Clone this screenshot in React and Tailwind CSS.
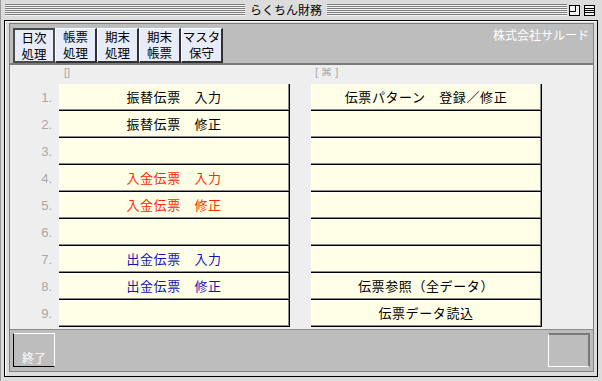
import React from "react";

const left = [
  { text: "振替伝票　入力", color: "text-black" },
  { text: "振替伝票　修正", color: "text-black" },
  { text: "", color: "text-black" },
  { text: "入金伝票　入力", color: "text-[#ff2a00]" },
  { text: "入金伝票　修正", color: "text-[#ff2a00]" },
  { text: "", color: "text-black" },
  { text: "出金伝票　入力", color: "text-[#1414b4]" },
  { text: "出金伝票　修正", color: "text-[#1414b4]" },
  { text: "", color: "text-black" },
];

const right = [
  "伝票パターン　登録／修正",
  "",
  "",
  "",
  "",
  "",
  "",
  "伝票参照（全データ）",
  "伝票データ読込",
];

const tabs = [
  ["日次", "処理"],
  ["帳票", "処理"],
  ["期末", "処理"],
  ["期末", "帳票"],
  ["マスタ", "保守"],
];

function Stripes() {
  return (
    <div className="flex-1 h-[12px] bg-[repeating-linear-gradient(to_bottom,#7c7c7c_0px,#7c7c7c_1px,#f4f4f4_1px,#f4f4f4_2px)]" />
  );
}

function MenuButton({ text, color }) {
  return (
    <div
      className={`h-[27px] w-[231px] flex items-center justify-center bg-[#ffffe8] border-r border-b border-black shadow-[inset_-1px_-1px_0_#8a8a8a,inset_1px_1px_0_#ffffff] text-[13px] tracking-[0.6px] ${color}`}
    >
      {text}
    </div>
  );
}

export default function App() {
  return (
    <div className="w-[602px] h-[381px] bg-[#dcdcdc] flex flex-col font-['Noto_Sans_CJK_JP',sans-serif] border-l border-[#9a9a9a]">
      {/* Title bar */}
      <div className="h-[20px] flex items-center pl-[4px] pr-[7px]">
        <Stripes />
        <span className="px-[5px] text-[12px] leading-none text-black">らくちん財務</span>
        <Stripes />
        <div className="flex items-center gap-[4px] pl-[2px]">
          <svg width="11" height="11" viewBox="0 0 11 11">
            <rect x="0.5" y="0.5" width="10" height="10" fill="#f4f4f4" stroke="#000" />
            <path d="M0.5 6.5H6.5V0.5" fill="none" stroke="#000" />
          </svg>
          <svg width="11" height="11" viewBox="0 0 11 11">
            <rect x="0.5" y="0.5" width="10" height="10" fill="#f4f4f4" stroke="#000" />
            <path d="M1 3.5H10M1 5.5H10M1 7.5H10" stroke="#000" />
          </svg>
        </div>
      </div>

      {/* Window frame */}
      <div className="ml-[3px] w-[594px] h-[357px] border border-black">
        <div className="h-full border-l border-t border-white pt-[1px] pl-[3px] pr-[3px] pb-[4px]">
          <div className="h-full border border-[#808080] flex flex-col">
            {/* Toolbar */}
            <div className="h-[39px] bg-[#bdbdbd] flex items-start justify-between pl-[3px] pr-[4px] pt-[4px]">
              <div className="flex">
                {tabs.map((t, i) => (
                  <div
                    key={i}
                    className={`w-[42px] h-[35px] flex flex-col items-center justify-center bg-[#e8ecf8] text-[12.5px] leading-[16px] text-black ${
                      i === 0
                        ? "border-2 border-[#4a4a4a]"
                        : "border-t border-l border-white border-r-2 border-b-2 border-r-[#303030] border-b-[#303030]"
                    }`}
                  >
                    <span className="block h-[16px]">{t[0]}</span>
                    <span className="block h-[16px]">{t[1]}</span>
                  </div>
                ))}
              </div>
              <span className="text-[12px] leading-[14px] text-white">株式会社サルード</span>
            </div>
            <div className="h-[2px] bg-[#7a7a7a]" />

            {/* Content */}
            <div className="h-[264px] bg-[#eeeeee] flex">
              <div className="flex flex-col">
                <div className="h-[19px] pl-[54px] pt-[1px] text-[11px] leading-[13px] text-[#a8a8a8] font-['Liberation_Sans',sans-serif]">
                  []
                </div>
                {left.map((b, i) => (
                  <div key={i} className="flex">
                    <div className="w-[49px] h-[27px] flex items-center justify-end pr-[7px] text-[13px] text-[#a8a8a8] font-['Liberation_Sans',sans-serif]">
                      {i + 1}.
                    </div>
                    <MenuButton text={b.text} color={b.color} />
                  </div>
                ))}
              </div>
              <div className="flex flex-col pl-[21px]">
                <div className="h-[19px] pl-[4px] pt-[1px] text-[11px] leading-[13px] text-[#a8a8a8] font-['Liberation_Sans',sans-serif]">
                  [ ⌘ ]
                </div>
                {right.map((t, i) => (
                  <MenuButton key={i} text={t} color="text-black" />
                ))}
              </div>
            </div>
            <div className="h-[1px] bg-[#8a8a8a]" />

            {/* Footer */}
            <div className="flex-1 bg-[#bdbdbd] flex items-start justify-between pl-[3px] pr-[3px] pt-[3px]">
              <div className="w-[42px] h-[34px] border-t border-r border-white border-l border-b border-l-black border-b-black flex items-end justify-center pb-[2px] text-[12px] leading-[13px] text-white">
                終了
              </div>
              <div className="w-[42px] h-[34px] border-t-2 border-r-2 border-t-[#7a7a7a] border-r-[#7a7a7a] border-l border-b border-white" />
            </div>
          </div>
        </div>
      </div>
    </div>
  );
}
